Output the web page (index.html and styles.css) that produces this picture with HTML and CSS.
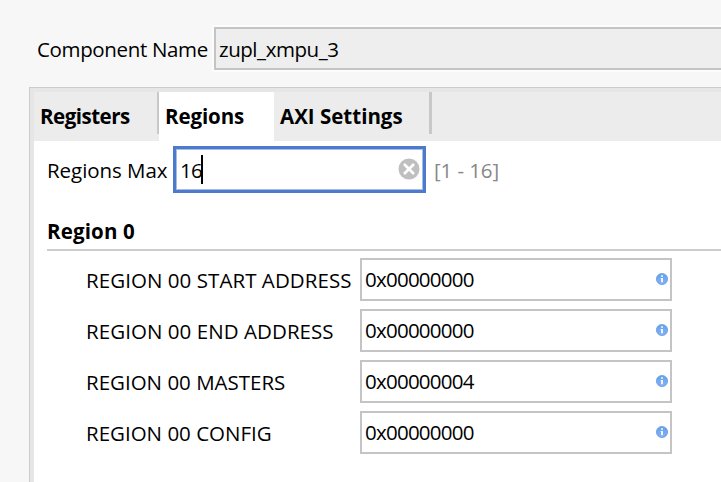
FILE: index.html
```html
<!DOCTYPE html>
<html lang="en">
<head>
<meta charset="utf-8">
<title>Customize IP</title>
<link rel="stylesheet" href="styles.css">
</head>
<body>
<svg class="defs" width="0" height="0" aria-hidden="true">
  <defs>
    <linearGradient id="blue" x1="0" y1="0" x2="0" y2="1"><stop offset="0" stop-color="#62a3e9"/><stop offset="1" stop-color="#86b0f7"/></linearGradient>
    <symbol id="info" viewBox="0 0 12 12"><circle cx="6" cy="6" r="5.6" fill="url(#blue)" stroke="#5e94dc" stroke-width=".7"/><path d="M5 2.2h2v1.6H5zM4.6 5H7v4.3H5V6h-.4z" fill="#f1f4fa"/></symbol>
  </defs>
</svg>
<header class="component">
  <span class="label t-component">Component Name</span>
  <div class="component-field"><span class="t-name">zupl_xmpu_3</span></div>
</header>
<main class="panel">
  <nav class="tabs">
    <div class="tab tab-registers"><span class="t-registers">Registers</span></div>
    <div class="tab tab-regions"><span class="t-regions">Regions</span></div>
    <div class="tab tab-axi"><span class="t-axi">AXI Settings</span></div>
  </nav>
  <div class="max-row">
    <span class="label t-max">Regions Max</span>
    <div class="max-field"><span class="t-16">16</span><i class="caret"></i>
      <svg class="clear" width="22" height="22" viewBox="0 0 22 22"><circle cx="11" cy="11" r="10.5" fill="#bfbfbf"/><path d="M6 6l10 10M16 6L6 16" stroke="#fff" stroke-width="2.7"/></svg>
    </div>
    <span class="range t-range">[1 - 16]</span>
  </div>
  <section>
    <h2><span class="t-region0">Region 0</span></h2>
    <div class="row"><label><span class="t-start">REGION 00 START ADDRESS</span></label><div class="field"><span class="t-hex">0x00000000</span><svg width="12" height="12"><use href="#info"/></svg></div></div>
    <div class="row"><label><span class="t-end">REGION 00 END ADDRESS</span></label><div class="field"><span class="t-hex">0x00000000</span><svg width="12" height="12"><use href="#info"/></svg></div></div>
    <div class="row"><label><span class="t-masters">REGION 00 MASTERS</span></label><div class="field"><span class="t-hex">0x00000004</span><svg width="12" height="12"><use href="#info"/></svg></div></div>
    <div class="row"><label><span class="t-config">REGION 00 CONFIG</span></label><div class="field"><span class="t-hex">0x00000000</span><svg width="12" height="12"><use href="#info"/></svg></div></div>
  </section>
</main>
</body>
</html>
```
FILE: styles.css
```css
* { box-sizing: border-box; }
body {
  margin: 0; width: 721px; height: 482px; overflow: hidden;
  display: flex; flex-direction: column;
  background: #f7f7f7; color: #000;
  font: 20.5px/28px "Open Sans", "Noto Sans", sans-serif;
  white-space: nowrap;
}
.defs { position: absolute; }
.component { display: flex; height: 87px; padding: 25px 0 16px 37px; }
.component .label { width: 175px; padding-top: 10px; }
.component-field {
  flex: 1; display: flex; align-items: center; padding: 1px 0 0 3px;
  margin: 2px 0 1px 2px; background: #eee;
  border: 2px solid #c4c4c4; border-right: 0; box-shadow: 0 0 0 2px #fcfcfc;
}
.panel {
  flex: 1; margin-left: 29px; background: #fff;
  border: solid #cbcbcb; border-width: 1px 0 0 1px;
  box-shadow: inset 4px 4px 0 #e6e6e6; padding: 4px 0 0 4px;
}
.tabs { display: flex; height: 49px; background: #ececec; font-weight: 700; }
.tab { padding: 10px 0 0 6px; }
.tab-registers, .tab-axi { background: linear-gradient(#c8c8c8, #c8c8c8) right top / 2px 42px no-repeat; }
.tab-registers { width: 125px; }
.tab-regions { width: 115px; background: #fff; }
.tab-axi { width: 158px; background-size: 3px 42px; }
.max-row { display: flex; height: 52px; margin-top: 5px; padding-left: 13px; }
.max-row .label { width: 126px; padding-top: 10px; }
.max-field {
  width: 253px; height: 47px; padding-left: 4px; display: flex; align-items: center;
  border: 3px solid #4d7acb; box-shadow: inset 0 0 0 1px #a6bce5;
}
.max-field span { width: 21px; }
.caret { width: 2px; height: 29px; background: #000; }
.clear { margin: 0 3px 2px auto; }
.range { color: #888; padding: 10px 0 0 8px; }
h2 {
  height: 53px; margin: 0 0 7px 13px; padding-top: 19px;
  border-bottom: 2px solid #cdcdcd; font-size: 20.5px; line-height: 28px;
}
.row { display: flex; height: 51px; padding-left: 52px; }
.row label { width: 274px; padding-top: 8px; }
.field {
  width: 312px; height: 43px; padding: 0 2px 2px 3px;
  display: flex; align-items: center; justify-content: space-between;
  border: 2px solid #c4c4c4;
}
.t-component { letter-spacing: -.35px; }
.t-name { letter-spacing: -.45px; }
.t-registers { letter-spacing: -.5px; }
.t-regions { letter-spacing: -.1px; }
.t-max { letter-spacing: -.05px; }
.t-16 { letter-spacing: -.8px; }
.t-range { letter-spacing: -.1px; }
.t-region0 { letter-spacing: .15px; }
.t-start, .t-end { letter-spacing: .06px; }
.t-hex { letter-spacing: -.75px; }
```
